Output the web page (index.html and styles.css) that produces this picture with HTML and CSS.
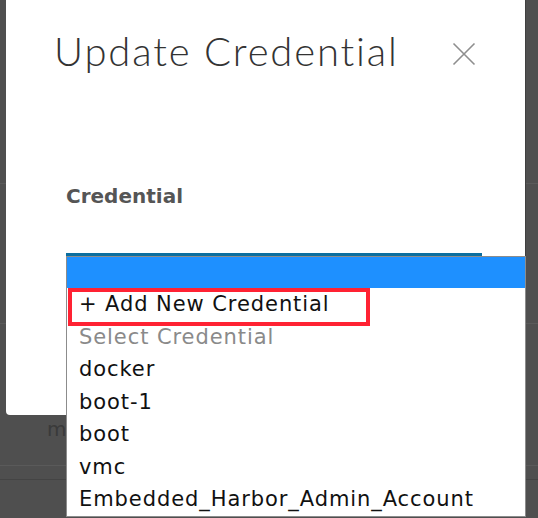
FILE: index.html
```html
<!DOCTYPE html>
<html>
<head>
<meta charset="utf-8">
<title>Update Credential</title>
<link rel="stylesheet" href="styles.css">
</head>
<body>
<div class="backdrop">
  <div class="bg-row r1"></div>
  <div class="bg-row r2"></div>
  <div class="bg-row r3"><span class="bg-text">m</span></div>
  <div class="bg-row r4"></div>
</div>
<div class="modal">
  <div class="modal-header">
    <h1 class="title">Update Credential</h1>
    <button class="close" aria-label="Close">
      <svg width="24" height="24" viewBox="0 0 24 24"><path d="M1.5 1.5 L22.5 22.5 M22.5 1.5 L1.5 22.5" stroke="#8e8e8e" stroke-width="1.6" fill="none"/></svg>
    </button>
  </div>
  <div class="modal-body">
    <div class="label">Credential</div>
    <div class="select">
      <div class="select-line"></div>
      <ul class="dropdown">
        <li class="opt selected"></li>
        <li class="opt add">+ Add New Credential<span class="mark"></span></li>
        <li class="opt placeholder">Select Credential</li>
        <li class="opt">docker</li>
        <li class="opt">boot-1</li>
        <li class="opt">boot</li>
        <li class="opt">vmc</li>
        <li class="opt">Embedded_Harbor_Admin_Account</li>
      </ul>
    </div>
  </div>
</div>
</body>
</html>
```
FILE: styles.css
```css
* { box-sizing: border-box; }
html, body {
  margin: 0;
  padding: 0;
}
body {
  width: 538px;
  height: 518px;
  overflow: hidden;
  background: #4f4f4f;
  position: relative;
  font-family: "DejaVu Sans", sans-serif;
}
.backdrop {
  display: flex;
  flex-direction: column;
}
.bg-row {
  border-bottom: 1px solid #5a5a5a;
}
.r1 { height: 184px; }
.r2 { height: 140px; }
.r3 { height: 142px; padding: 93px 0 0 47px; }
.r4 { height: 14px; border-bottom-color: #444; }
.bg-text {
  font-family: "DejaVu Sans", sans-serif;
  font-size: 20px;
  color: #3a3a3a;
}
.modal {
  position: absolute;
  left: 6px;
  top: 0;
  width: 520px;
  height: 415px;
  background: #fff;
  border-bottom-left-radius: 4px;
  border-right: 1px solid #3f3f3f;
}
.modal-header {
  display: flex;
  justify-content: space-between;
  align-items: flex-start;
  padding: 32px 49px 0 48px;
}
.title {
  margin: 0;
  font-family: "Lato", sans-serif;
  font-weight: 300;
  font-size: 40px;
  letter-spacing: 1.85px;
  line-height: 38px;
  color: #333;
}
.close {
  margin-top: 10px;
  width: 24px;
  height: 24px;
  padding: 0;
  border: 0;
  background: none;
  display: block;
}
.close svg { display: block; }
.modal-body {
  padding: 114px 0 0 60px;
}
.label {
  font-family: "DejaVu Sans", sans-serif;
  font-weight: bold;
  font-size: 20px;
  line-height: 24px;
  color: #555;
}
.select {
  position: relative;
  margin-top: 45px;
  width: 416px;
}
.select-line {
  height: 3px;
  background: #0a6e9f;
}
.dropdown {
  position: absolute;
  left: 0;
  top: 3px;
  width: 460px;
  margin: 0;
  padding: 0;
  list-style: none;
  background: #fff;
  border: 1px solid #8c8c8c;
}
.opt {
  position: relative;
  height: 32.5px;
  line-height: 32.5px;
  padding-left: 12px;
  font-family: "DejaVu Sans", sans-serif;
  font-size: 21px;
  letter-spacing: 0.92px;
  color: #111;
  white-space: nowrap;
}
.opt.selected {
  height: 31px;
  background: #1e90ff;
}
.opt.placeholder { color: #8a8a8a; }
.mark {
  position: absolute;
  left: 1px;
  top: 0;
  width: 302px;
  height: 38px;
  border: 4px solid #ff2233;
}
```
